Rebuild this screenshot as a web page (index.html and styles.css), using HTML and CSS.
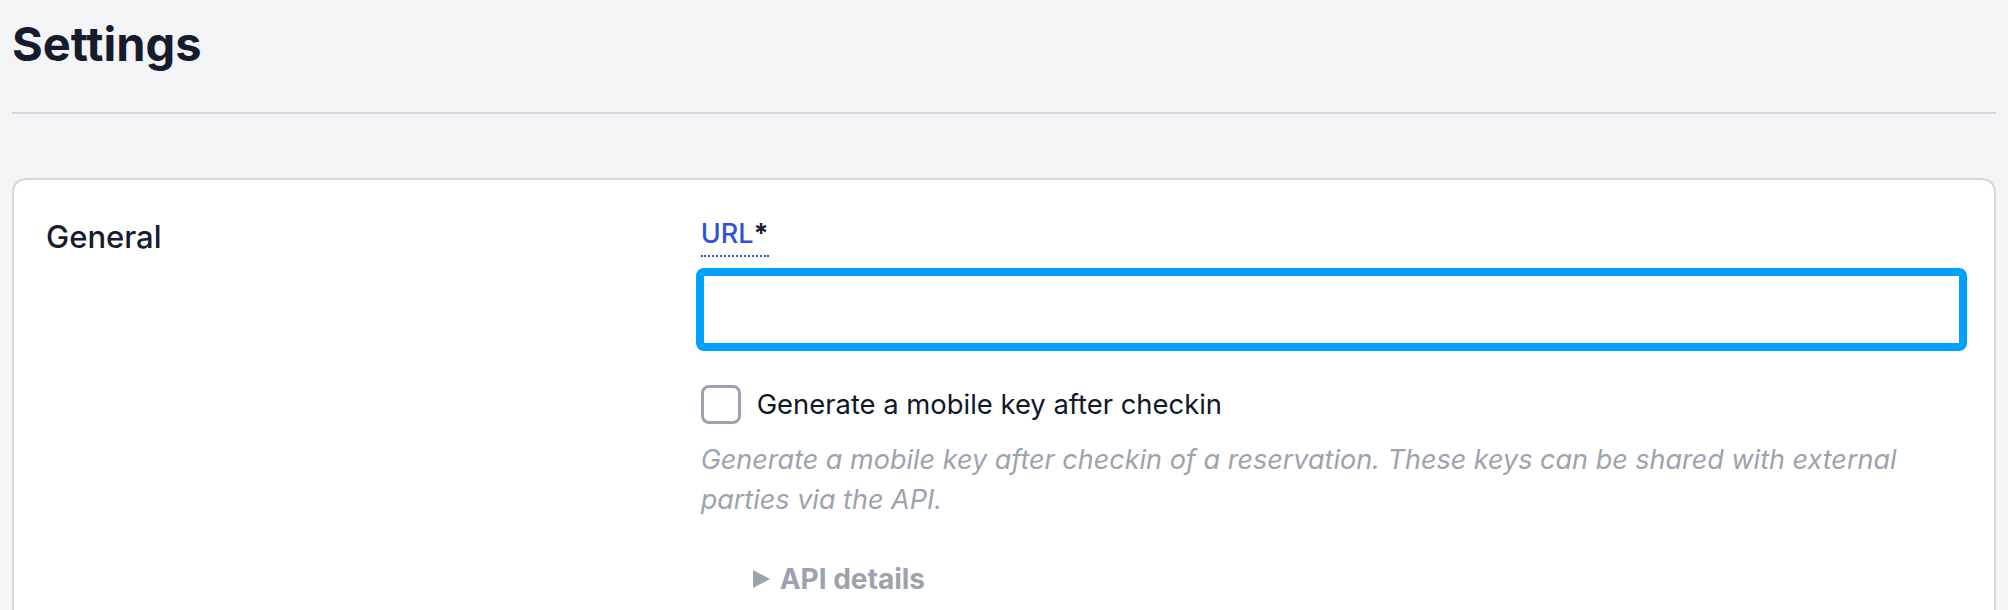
FILE: index.html
```html
<!DOCTYPE html>
<html lang="en">
<head>
  <meta charset="UTF-8">
  <title>Settings</title>
  <link rel="stylesheet" href="styles.css">
</head>
<body>

  <h1 class="titulo">Settings</h1>
  <hr class="separador">

  <!-- Tarjeta de ajustes -->
  <div class="tarjeta">
    <div class="seccion">
      <h2 class="seccion-nombre">General</h2>

      <div class="campos">
        <div class="campo">
          <label class="etiqueta" for="url"><span class="etiqueta-texto">URL</span><span class="requerido">*</span></label>
          <input type="text" id="url" class="entrada">
        </div>

        <div class="casilla">
          <input type="checkbox" id="llave" class="casilla-caja">
          <label for="llave" class="casilla-texto">Generate a mobile key after checkin</label>
        </div>
        <p class="ayuda">Generate a mobile key after checkin of a reservation. These keys can be shared with external parties via the API.</p>

        <details class="detalles">
          <summary>API details</summary>
        </details>
      </div>
    </div>
  </div>

</body>
</html>
```

FILE: styles.css
```css
body {
  font-family: Inter, "Noto Sans", sans-serif;
  background-color: #f3f4f6;
  color: #111827;
  margin: 0;
  padding: 14px 12px 40px;
}

.titulo {
  margin: 0;
  font-size: 47px;
  line-height: 60px;
  font-weight: 700;
  color: #161c2d;
}

.separador {
  border: 0;
  height: 2px;
  background-color: #d4d6db;
  margin: 38px 0 64px;
}

.tarjeta {
  background-color: white;
  border: 2px solid #d4d6db;
  border-radius: 14px;
  padding: 34px 32px 40px;
}

.seccion {
  display: grid;
  grid-template-columns: 1fr 2fr;
  gap: 24px;
}

.seccion-nombre {
  margin: 0;
  font-size: 31px;
  line-height: 1.5;
  font-weight: 500;
  color: #161c2d;
}

.campos {
  display: flex;
  flex-direction: column;
}

.campo {
  display: flex;
  flex-direction: column;
  align-items: flex-start;
}

.etiqueta {
  display: inline-block;
  font-size: 27px;
  line-height: 1.5;
  font-weight: 500;
  border-bottom: 2px dotted #2d52d6;
}

.etiqueta-texto {
  color: #2d52d6;
}

.requerido {
  color: #161c2d;
  font-weight: 700;
}

.entrada {
  display: block;
  width: 100%;
  box-sizing: border-box;
  height: 73px;
  margin: 16px 0 0;
  border: 3px solid #00a0ff;
  outline: 5px solid #00a0ff;
  border-radius: 3px;
  font-size: 27px;
  padding: 0 16px;
}

.casilla {
  display: flex;
  align-items: center;
  gap: 16px;
  margin-top: 38px;
}

.casilla-caja {
  appearance: none;
  margin: 0;
  width: 40px;
  height: 39px;
  border: 3px solid #9ca3af;
  border-radius: 8px;
  background-color: white;
}

.casilla-texto {
  font-size: 27.4px;
  line-height: 1.5;
}

.ayuda {
  margin: 15px 0 0;
  font-size: 27px;
  line-height: 1.5;
  font-style: italic;
  color: #9ca3af;
}

.detalles {
  margin-top: 37px;
  margin-left: 52px;
}

.detalles summary {
  list-style: none;
  display: flex;
  align-items: center;
  gap: 10px;
  font-size: 28px;
  line-height: 1.5;
  font-weight: 700;
  color: #9ca3af;
  cursor: pointer;
}

.detalles summary::-webkit-details-marker {
  display: none;
}

.detalles summary::before {
  content: "";
  width: 0;
  height: 0;
  border-top: 9px solid transparent;
  border-bottom: 9px solid transparent;
  border-left: 17px solid #9ca3af;
}
```
